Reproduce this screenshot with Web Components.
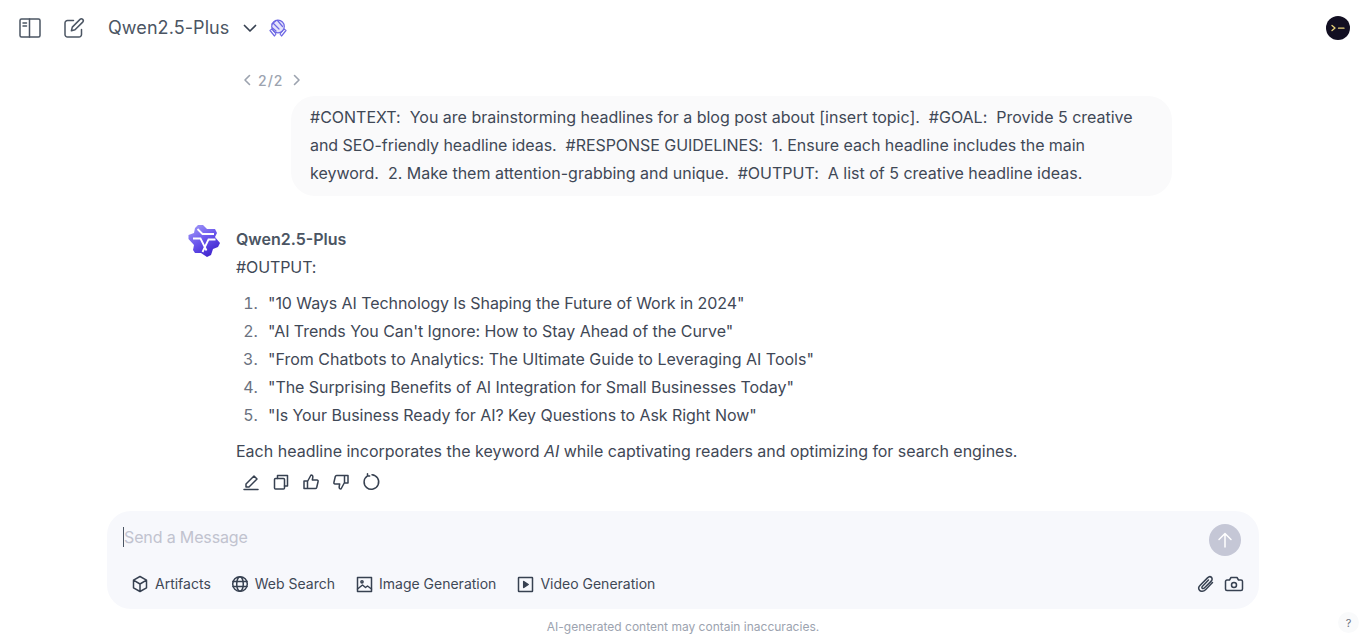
<!DOCTYPE html>
<html><head><meta charset="utf-8">
<style>
html,body{margin:0;height:641px;overflow:hidden;background:#fff;color:#3f4856;font-family:Inter,"Liberation Sans",sans-serif}
</style></head><body>
<chat-app></chat-app>
<template id="t-app"><style>
:host{display:flex;flex-direction:column;height:641px;position:relative}
.scroll{flex:1;min-height:0;overflow:hidden}
.a{letter-spacing:-.006px}.b{letter-spacing:-.05px}
</style>
<top-bar></top-bar>
<div class="scroll">
<user-msg><span class="a">#CONTEXT:&nbsp; You are brainstorming headlines for a blog post about [insert topic].&nbsp; #GOAL:&nbsp; Provide 5 creative </span><span class="b">and SEO-friendly headline ideas.&nbsp; #RESPONSE GUIDELINES:&nbsp; 1. Ensure each headline includes the main </span><span class="a">keyword.&nbsp; 2. Make them attention-grabbing and unique.&nbsp; #OUTPUT:&nbsp; A list of 5 creative headline ideas.</span></user-msg>
<bot-msg></bot-msg>
</div>
<composer-box></composer-box>
<help-dot></help-dot>
</template>

<template id="t-top"><style>
:host{display:flex;align-items:center;height:56px;padding:0 16px 0 18px;flex:none;color:#4b5563}
svg{display:block;fill:none;stroke:currentColor;stroke-width:1.5;stroke-linecap:round;stroke-linejoin:round}
.name{font-size:18px;line-height:28px;color:#4b5563;margin-left:22px;letter-spacing:.08px}
.chev{margin-left:13px}
.sp{flex:1}
.ava{width:24px;height:24px;border-radius:50%;background:#120f22;display:flex;align-items:center;justify-content:center}
</style>
<svg width="24" height="24" viewBox="0 0 24 24"><rect x="2" y="3" width="20" height="18" rx="1.5"/><path d="M11.5 3v18M5 7h3.5M5 10h3.5"/></svg>
<svg style="margin-left:20px" width="24" height="24" viewBox="0 0 24 24"><path d="M19.5 13.5v5a2.5 2.5 0 0 1-2.5 2.5H5.500A2.500 2.500 0 0 1 3 18.500V7a2.500 2.500 0 0 1 2.500-2.500h6"/><path d="M18 3.400a1.900 1.900 0 0 1 2.700 2.700L13 13.800l-3.600.9.900-3.600z"/></svg>
<span class="name">Qwen2.5-Plus</span>
<svg class="chev" width="16" height="16" viewBox="0 0 16 16" style="stroke-width:1.700;color:#374151"><path d="M2.500 5.500 8 11l5.500-5.500"/></svg>
<svg style="margin-left:10px;color:#6d67e4;stroke-width:1.200" width="20" height="20" viewBox="0 0 20 20"><circle cx="10" cy="8.500" r="6.300" fill="#e4e3fb"/><path d="M2 12.500l2-1.500 4 5-1.500 2zM18 12.500l-2-1.500-4 5 1.500 2zM5.500 5.500 11 11M9.500 2.500 14.500 8.500M4.500 10 8 13M8 2.500 4 6"/></svg>
<span class="sp"></span>
<span class="ava"><svg width="14" height="8" viewBox="0 0 14 8" style="stroke:#e8d27a;stroke-width:1.300"><path d="M1 1.500 4 4 1 6.500M7.500 4.200H13"/></svg></span>
</template>

<template id="t-user"><style>
:host{display:block;width:928px;margin:0 auto 0 243px}
.nav{display:flex;align-items:center;height:16px;margin:16px 0 8px;font-size:14px;font-weight:500;color:#9ca3af;letter-spacing:1px}
.nav svg{fill:none;stroke:currentColor;stroke-width:1.600;stroke-linecap:round;stroke-linejoin:round;display:block}
.nav span{margin:0 10px 0 7px}
.bubble{margin-left:48px;width:844px;padding:7px 18px 9px 19px;background:#fafafb;border-radius:24px;font-size:16px;line-height:28px;color:#3f4856}
</style>
<div class="nav"><svg width="8" height="12" viewBox="0 0 8 12"><path d="M6.500 1.500 2 6l4.500 4.500"/></svg><span>2/2</span><svg width="8" height="12" viewBox="0 0 8 12"><path d="M1.500 1.500 6 6l-4.500 4.500"/></svg></div>
<div class="bubble"><slot></slot></div>
</template>

<template id="t-bot"><style>
:host{display:flex;margin:29px 0 0 188px;width:1000px;font-size:16px;line-height:28px;color:#3f4856}
.logo{flex:none;width:32px;height:34px;margin-right:16px;margin-top:-1px}
.body{flex:1;min-width:0}
.name{font-weight:600;color:#4b5563;line-height:28px}
p{margin:0;line-height:28px}
ol{margin:8px 0;padding:0 0 0 26px;}
li{padding-left:6px;line-height:28px}
li::marker{color:#6b7280}
em{font-style:italic}
.acts{display:flex;gap:10px;margin-top:7px;padding-left:5px;color:#374151}
.acts svg{display:block;fill:none;stroke:currentColor;stroke-width:1.500;stroke-linecap:round;stroke-linejoin:round}
</style>
<svg class="logo" viewBox="0 0 32 34"><defs><linearGradient id="g" x1="0.100" y1="0" x2="0.700" y2="1"><stop offset="0" stop-color="#a29af8"/><stop offset=".5" stop-color="#6a56ec"/><stop offset="1" stop-color="#3d22cc"/></linearGradient></defs>
<path fill="url(#g)" d="M10 1 15 1 19 5 27 5 29 9 27 13 32 19 30 23 25 25 23 31 19 33 13 29 7 29 5 26 6 21 .5 15 .5 11 6 9 7 4z"/>
<path fill="none" stroke="#fff" stroke-width="1.800" stroke-linejoin="miter" d="M9.500 5 14.500 10H26M5 14.500H12.500L18.500 26.500M27.500 15.500H20.500L14.500 28"/></svg>
<div class="body">
<div class="name">Qwen2.5-Plus</div>
<p style="letter-spacing:-.1px">#OUTPUT:</p>
<ol>
<li style="letter-spacing:-.067px">"10 Ways AI Technology Is Shaping the Future of Work in 2024"</li>
<li style="letter-spacing:-.05px">"AI Trends You Can't Ignore: How to Stay Ahead of the Curve"</li>
<li>"From Chatbots to Analytics: The Ultimate Guide to Leveraging AI Tools"</li>
<li style="letter-spacing:-.058px">"The Surprising Benefits of AI Integration for Small Businesses Today"</li>
<li style="letter-spacing:-.055px">"Is Your Business Ready for AI? Key Questions to Ask Right Now"</li>
</ol>
<p>Each headline incorporates the keyword <em>AI</em> <span style="letter-spacing:-.035px">while captivating readers and optimizing for search engines.</span></p>
<div class="acts">
<svg width="20" height="20" viewBox="0 0 20 20"><path d="M3 17.500h14M5 12 13 4l3 3-8 8H5z"/></svg>
<svg width="20" height="20" viewBox="0 0 20 20"><rect x="3.500" y="6.500" width="10" height="10.500" rx="1"/><path d="M6.500 6.500V3.500h10v10.500h-3"/></svg>
<svg width="20" height="20" viewBox="0 0 20 20"><path d="M6.500 9v7.500h-3.500V9zM6.500 9.500 10 3c1.500 0 2 1 1.800 2.500L11.300 8H16c.8 0 1.300.7 1.100 1.500l-1.400 6c-.2.600-.6 1-1.300 1H6.500"/></svg>
<svg width="20" height="20" viewBox="0 0 20 20"><path d="M13.500 11V3.500H17V11zM13.500 10.500 10 17c-1.500 0-2-1-1.800-2.500l.5-2.500H4c-.8 0-1.300-.7-1.100-1.500l1.400-6c.2-.6.600-1 1.300-1h7.900"/></svg>
<svg width="20" height="20" viewBox="0 0 20 20" style="margin-left:1px"><path d="M5.500 3.800A7.300 7.300 0 1 0 10 2.700M5.500 1.800v2.200h2.200"/></svg>
</div>
</div>
</template>

<template id="t-comp"><style>
:host{display:block;flex:none;margin:0 107px;height:130px;position:relative;font-size:14px;color:#3f4856}
.box{height:98px;background:#f7f8fc;border-radius:24px;position:relative;display:flex;flex-direction:column;box-sizing:border-box;padding:8px 18px 0 16px}
.row1{display:flex;align-items:flex-start;height:42px}
.caret{width:1px;height:20px;background:#4b5563;margin-top:8px}
.ph{font-size:16px;line-height:28px;color:#c1c3cf;letter-spacing:-.14px;margin-top:-2px;padding-top:6px}
.sp{flex:1}
.send{width:32px;height:32px;border-radius:50%;background:#c5c7d6;display:flex;align-items:center;justify-content:center;margin-top:5px}
.row2{display:flex;align-items:center;margin-top:9px;margin-right:-3px;height:28px;padding-left:8px}
.t{display:flex;align-items:center;gap:6px;margin-right:21px;line-height:20px;white-space:nowrap;color:#3f4856}
.t:first-child{margin-right:20px}
svg{display:block;fill:none;stroke:#374151;stroke-width:1.500;stroke-linecap:round;stroke-linejoin:round}
.foot{text-align:center;font-size:12px;line-height:16px;color:#9ca3af;margin-top:10px}
</style>
<div class="box">
<div class="row1"><span class="caret"></span><span class="ph">Send a Message</span><span class="sp"></span><span class="send"><svg width="18" height="18" viewBox="0 0 18 18" style="stroke:#fff"><path d="M9 16V2.500M3 8.500l6-6 6 6"/></svg></span></div>
<div class="row2">
<span class="t"><svg width="18" height="18" viewBox="0 0 18 18"><path d="M9 1.500 15.500 5.200v7.600L9 16.500 2.500 12.800V5.200zM2.500 5.200 9 9l6.500-3.800M9 9v7.500"/></svg>Artifacts</span>
<span class="t"><svg width="18" height="18" viewBox="0 0 18 18"><circle cx="9" cy="9" r="7.300"/><ellipse cx="9" cy="9" rx="3.300" ry="7.300"/><path d="M2 6.500h14M2 11.500h14"/></svg>Web Search</span>
<span class="t"><svg width="17" height="17" viewBox="0 0 17 17"><rect x="1.500" y="1.500" width="14" height="14"/><circle cx="6" cy="5.800" r="1.100"/><path d="M1.500 13 6.500 9l3 2.500 2-1.500 4 3"/></svg>Image Generation</span>
<span class="t"><svg width="17" height="17" viewBox="0 0 17 17"><rect x="1.500" y="1.500" width="14" height="14" rx=".5"/><path d="M6.700 5.500v6l4.500-3z" fill="#374151"/></svg>Video Generation</span>
<span class="sp"></span>
<svg width="20" height="20" viewBox="0 0 20 20" style="margin-right:8px"><path d="M16.500 8.500 9.500 15.700c-2 2-5 2-6 .6-1.300-1.500-.8-3.500.7-5L11.500 3.900c1.300-1.300 3-1.500 4-.5 1 1 .8 2.700-.5 4L8.300 14c-.7.700-1.600.8-2.100.3-.5-.5-.4-1.400.3-2.100L12.500 6"/></svg>
<svg width="20" height="20" viewBox="0 0 20 20"><path d="M3 6h2.500l1.500-2.500h6L14.500 6H17a1.500 1.500 0 0 1 1.500 1.500V15A1.500 1.500 0 0 1 17 16.500H3A1.500 1.500 0 0 1 1.500 15V7.500A1.500 1.500 0 0 1 3 6z"/><circle cx="10" cy="11" r="2.500"/></svg>
</div>
</div>
<div class="foot">AI-generated content may contain inaccuracies.</div>
</template>

<template id="t-help"><style>
:host{position:absolute;right:7px;bottom:8px;width:21px;height:21px;border-radius:50%;background:#f9fafb;color:#6b7280;font-size:11px;display:flex;align-items:center;justify-content:center}
</style>?</template>

<script>
[['chat-app','t-app'],['top-bar','t-top'],['user-msg','t-user'],['bot-msg','t-bot'],['composer-box','t-comp'],['help-dot','t-help']].forEach(([n,t])=>{
customElements.define(n,class extends HTMLElement{constructor(){super();this.attachShadow({mode:'open'}).appendChild(document.getElementById(t).content.cloneNode(true))}})
});
</script>
</body></html>
